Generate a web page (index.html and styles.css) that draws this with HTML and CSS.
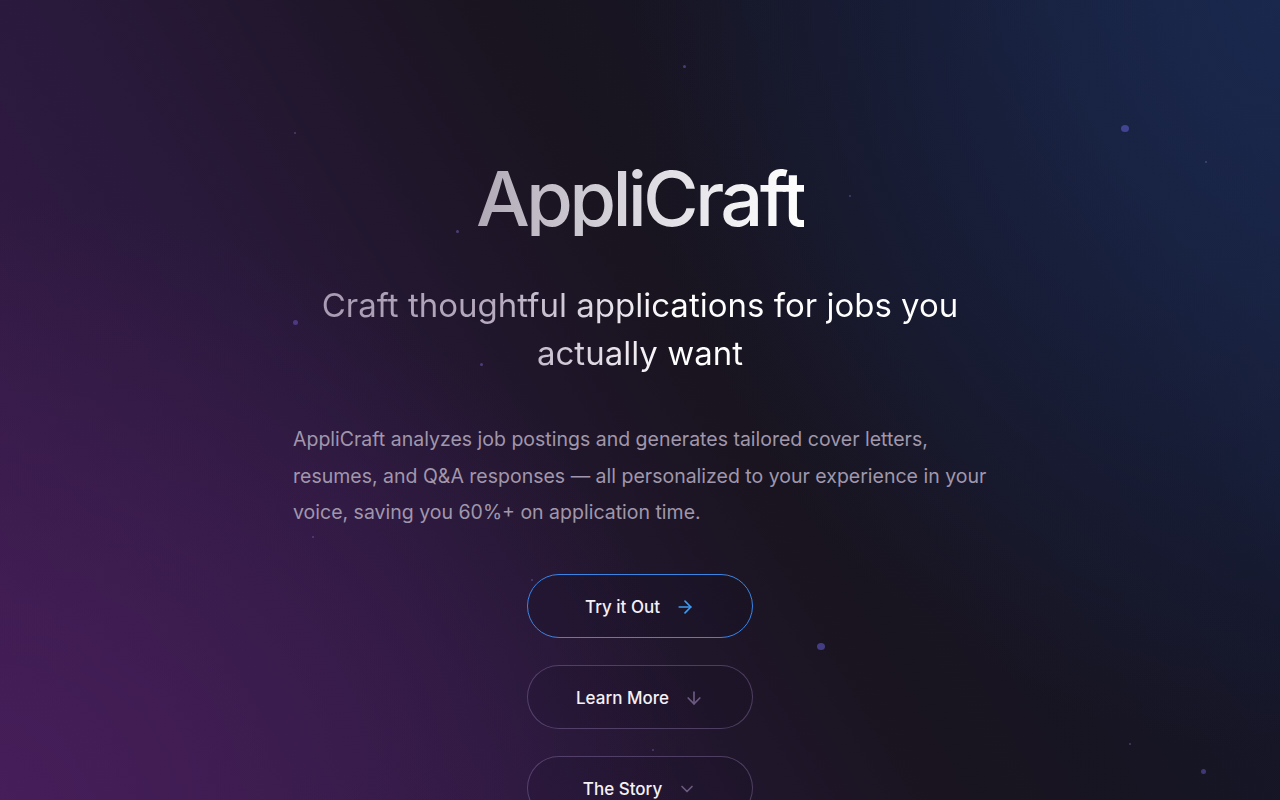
FILE: index.html
```html
<!DOCTYPE html>
<html lang="en">
<head>
<meta charset="utf-8">
<title>AppliCraft</title>
<link rel="stylesheet" href="styles.css">
</head>
<body>
<div class="page">
  <div class="particles" aria-hidden="true">
    <span class="dot d-sm" style="left:683px;top:65px"></span>
    <span class="dot d-xs" style="left:294px;top:132px"></span>
    <span class="dot d-lg" style="left:1121px;top:125px"></span>
    <span class="dot d-xs" style="left:1205px;top:161px"></span>
    <span class="dot d-sm" style="left:456px;top:230px"></span>
    <span class="dot d-xs" style="left:849px;top:195px"></span>
    <span class="dot d-md" style="left:293px;top:320px"></span>
    <span class="dot d-sm" style="left:480px;top:363px"></span>
    <span class="dot d-xs" style="left:312px;top:536px"></span>
    <span class="dot d-xs" style="left:531px;top:579px"></span>
    <span class="dot d-lg" style="left:817px;top:643px"></span>
    <span class="dot d-xs" style="left:652px;top:749px"></span>
    <span class="dot d-xs" style="left:1129px;top:743px"></span>
    <span class="dot d-md" style="left:1201px;top:769px"></span>
  </div>
  <main class="hero">
    <h1 class="title">AppliCraft</h1>
    <h2 class="subtitle">Craft thoughtful applications for jobs you actually want</h2>
    <p class="lead">AppliCraft analyzes job postings and generates tailored cover letters, resumes, and Q&amp;A responses — all personalized to your experience in your voice, saving you 60%+ on application time.</p>
    <div class="actions">
      <a class="btn btn-primary" href="#">
        <span>Try it Out</span>
        <svg class="icon icon-blue" viewBox="0 0 24 24" fill="none" stroke="currentColor" stroke-width="2" stroke-linecap="round" stroke-linejoin="round"><path d="M5 12h14"/><path d="m12 5 7 7-7 7"/></svg>
      </a>
      <a class="btn btn-ghost" href="#">
        <span>Learn More</span>
        <svg class="icon icon-muted" viewBox="0 0 24 24" fill="none" stroke="currentColor" stroke-width="2" stroke-linecap="round" stroke-linejoin="round"><path d="M12 5v14"/><path d="m19 12-7 7-7-7"/></svg>
      </a>
      <a class="btn btn-ghost" href="#">
        <span>The Story</span>
        <svg class="icon icon-muted" viewBox="0 0 24 24" fill="none" stroke="currentColor" stroke-width="2" stroke-linecap="round" stroke-linejoin="round"><path d="m6 9 6 6 6-6"/></svg>
      </a>
    </div>
  </main>
</div>
</body>
</html>
```
FILE: styles.css
```css
* { box-sizing: border-box; }
html, body { margin: 0; padding: 0; }
body {
  font-family: Inter, "Noto Sans", "Liberation Sans", sans-serif;
  color: #fff;
  background: #16131f;
}
.page {
  position: relative;
  width: 100%;
  height: 800px;
  overflow: hidden;
  background:
    radial-gradient(ellipse 700px 600px at 0% 100%, rgba(72, 30, 92, 0.85), rgba(72, 30, 92, 0) 100%),
    radial-gradient(ellipse 650px 750px at 100% 0%, rgba(26, 40, 78, 0.95), rgba(26, 40, 78, 0) 100%),
    linear-gradient(60deg, #3a1c4c 0%, #29193b 30%, #19141f 55%, #151628 80%, #18213f 100%);
}
.particles { position: absolute; inset: 0; pointer-events: none; }
.dot {
  position: absolute;
  border-radius: 50%;
  background: rgba(110, 100, 210, 0.6);
}
.d-xs { width: 2px; height: 2px; background: rgba(120, 110, 200, 0.45); }
.d-sm { width: 3px; height: 3px; background: rgba(120, 100, 200, 0.5); }
.d-md { width: 5px; height: 5px; background: rgba(110, 90, 200, 0.5); filter: blur(0.5px); }
.d-lg { width: 8px; height: 7px; background: rgba(100, 95, 210, 0.55); filter: blur(0.6px); }

.hero {
  position: relative;
  display: flex;
  flex-direction: column;
  align-items: center;
  padding-top: 160px;
}
.title {
  margin: 0;
  font-size: 76px;
  line-height: 1;
  font-weight: 500;
  letter-spacing: -0.05em;
  background: linear-gradient(90deg, #b0a9b6 0%, #d8d5dc 45%, #ffffff 100%);
  -webkit-background-clip: text;
  background-clip: text;
  color: transparent;
}
.subtitle {
  margin: 45px 0 0;
  width: 700px;
  text-align: center;
  font-size: 33px;
  line-height: 48px;
  font-weight: 400;
  letter-spacing: 0;
  background: linear-gradient(90deg, #a698b0 0%, #b6abbf 30%, #ffffff 55%, #ffffff 100%);
  -webkit-background-clip: text;
  background-clip: text;
  color: transparent;
}
.lead {
  margin: 44px 0 0;
  width: 694px;
  font-size: 19.5px;
  line-height: 36.5px;
  color: #a097ac;
  text-align: left;
}
.actions {
  margin-top: 43px;
  display: flex;
  flex-direction: column;
  align-items: center;
  gap: 27px;
}
.btn {
  display: flex;
  align-items: center;
  justify-content: center;
  gap: 15px;
  width: 226px;
  height: 64px;
  border-radius: 999px;
  text-decoration: none;
  color: #f4f1f6;
  font-size: 17px;
  font-weight: 500;
  padding-top: 3px;
}
.btn-primary {
  border: 1px solid #3a84e6;
  background: rgba(20, 16, 36, 0.25);
}
.btn-ghost {
  border: 1px solid rgba(170, 140, 200, 0.35);
  background: rgba(20, 16, 36, 0.15);
}
.icon { width: 20px; height: 20px; flex: none; }
.icon-blue { color: #3b9cf2; }
.icon-muted { color: #6d5a82; }
```
